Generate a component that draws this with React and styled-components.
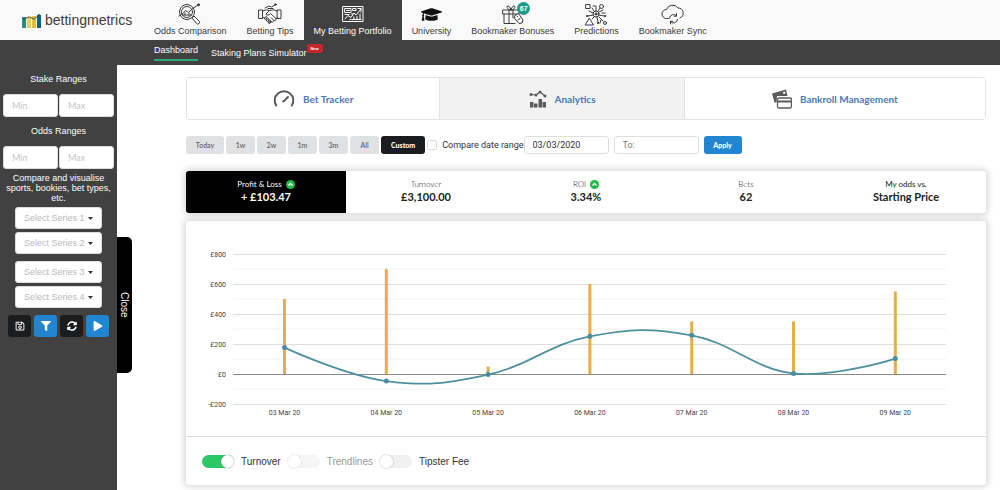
import React from "react";
import styled, { createGlobalStyle, css } from "styled-components";
import { FaGraduationCap, FaFilter, FaSyncAlt, FaPlay, FaRegSave } from "react-icons/fa";

const sans = `"Liberation Sans", Arial, sans-serif`;
const lato = `Lato, "Liberation Sans", sans-serif`;
const dark = "#414141";
const blue = "#2185d0";

const GlobalStyle = createGlobalStyle`
  *, *::before, *::after { box-sizing: border-box; }
  body { margin: 0; background: #fff; color: #333; font-family: ${sans}; font-size: 9px; }
  button, input, select { font: inherit; margin: 0; }
  a { color: inherit; text-decoration: none; }
`;

const Page = styled.div`
  display: flex;
  flex-direction: column;
  min-height: 100vh;
`;

const Header = styled.header`
  display: flex;
  height: 40px;
  background: #f9f9f9;
`;

const Logo = styled.a`
  display: flex;
  align-items: center;
  gap: 4px;
  width: 144px;
  padding-left: 22px;
  font-size: 14px;
  color: #3c3c3c;
`;

const Nav = styled.nav`
  display: flex;
`;

const NavItem = styled.a`
  position: relative;
  display: flex;
  flex-direction: column;
  align-items: center;
  padding: 3px 10px 0;
  line-height: 10px;
  white-space: nowrap;
  color: ${(p) => (p.$active ? "#fff" : "#3a3a3a")};
  background: ${(p) => (p.$active ? dark : "transparent")};
  svg { height: 23px; }
`;

const CountBadge = styled.span`
  position: absolute;
  top: 2px;
  left: 56px;
  width: 13px;
  height: 13px;
  border-radius: 50%;
  background: #1a9c86;
  color: #fff;
  font: bold 7px/13px ${sans};
  text-align: center;
`;

const SubNav = styled.nav`
  display: flex;
  align-items: flex-start;
  gap: 13px;
  height: 25px;
  padding: 4px 0 0 154px;
  background: ${dark};
  color: #fff;
`;

const SubLink = styled.a`
  position: relative;
  line-height: 12px;
  height: 17px;
  ${(p) => (p.$active ? css`border-bottom: 2px solid #2fa878;` : css`padding-top: 3px;`)}
`;

const NewBadge = styled.span`
  position: absolute;
  top: 0;
  left: 100%;
  width: 16px;
  height: 9px;
  border-radius: 3px;
  background: #c5282c;
  font: bold 4px/9px ${sans};
  text-align: center;
`;

const Body = styled.div`
  display: flex;
  flex: 1;
`;

const Sidebar = styled.aside`
  position: relative;
  flex: none;
  width: 117px;
  padding: 8px 3px;
  background: ${dark};
  color: #fff;
`;

const CloseTab = styled.button`
  position: absolute;
  top: 172px;
  left: 100%;
  width: 15px;
  height: 136px;
  padding: 0;
  border: 0;
  border-radius: 0 5px 5px 0;
  background: #000;
  color: #fff;
  font-size: 10px;
  line-height: 15px;
  writing-mode: vertical-rl;
`;

const RangeGroup = styled.fieldset`
  margin: 0;
  padding: 0;
  border: 0;
`;

const RangeTitle = styled.legend`
  width: 100%;
  padding: 0;
  line-height: 12px;
  margin-bottom: 9px;
  text-align: center;
`;

const RangeRow = styled.div`
  display: grid;
  grid-template-columns: 1fr 1fr;
  gap: 1px;
  margin-bottom: 8px;
`;

const TextInput = styled.input`
  min-width: 0;
  height: 23px;
  padding: 0 8px;
  border: 1px solid #dedede;
  border-radius: 3px;
  background: #fff;
  color: #333;
  font-family: ${lato};
  &::placeholder { color: #c4c4c4; }
`;

const CompareNote = styled.p`
  margin: -4px 0 4px;
  line-height: 10px;
  text-align: center;
`;

const SeriesList = styled.div`
  display: flex;
  flex-direction: column;
  gap: 3px;
  padding: 0 12px;
  margin-bottom: 7px;
`;

const SeriesBox = styled.div`
  position: relative;
  margin-bottom: ${(p) => (p.$spaced ? "4px" : "0")};
  svg { position: absolute; right: 9px; top: 10px; pointer-events: none; }
`;

const SeriesSelect = styled.select`
  appearance: none;
  display: block;
  width: 100%;
  height: 22px;
  padding: 0 0 0 8px;
  border: 1px solid #ddd;
  border-radius: 3px;
  background: #fff;
  color: #b9b9b9;
`;

const ActionRow = styled.div`
  display: flex;
  justify-content: center;
  gap: 3px;
`;

const ActionButton = styled.button`
  display: grid;
  place-items: center;
  width: 23px;
  height: 22px;
  padding: 0;
  border: 0;
  border-radius: 3px;
  background: ${(p) => (p.$primary ? blue : "#1b1c1d")};
  color: #fff;
  font-size: 10px;
`;

const Main = styled.main`
  flex: 1;
  min-width: 0;
  padding: 12px 14px 5px 69px;
`;

const Tabs = styled.nav`
  display: grid;
  grid-template-columns: 254fr 245fr 301fr;
  height: 43px;
  border: 1px solid #e2e3e4;
  border-radius: 3px;
`;

const Tab = styled.a`
  display: flex;
  align-items: center;
  justify-content: center;
  gap: 8px;
  border-right: 1px solid #e2e3e4;
  background: ${(p) => (p.$active ? "#f2f2f3" : "#fff")};
  color: #4a78b5;
  font: bold 10px/14px ${lato};
  &:last-child { border-right: 0; }
  svg { color: #5a5a5a; }
`;

const Filters = styled.form`
  display: flex;
  align-items: center;
  gap: 2px;
  margin: 15px 0 17px;
  height: 19px;
`;

const PeriodButton = styled.button`
  height: 18px;
  min-width: ${(p) => (p.$wide ? "38px" : "29px")};
  padding: 0 ${(p) => (p.$active ? "10px" : "0")};
  border: 0;
  border-radius: 3px;
  background: ${(p) => (p.$active ? "#1b1c1d" : "#e0e1e2")};
  color: ${(p) => (p.$active ? "#fff" : "#666")};
  font: bold 7px/18px ${lato};
  font-weight: ${(p) => (p.$active ? 900 : 600)};
`;

const Compare = styled.label`
  display: flex;
  align-items: center;
  gap: 5px;
  margin-right: -2px;
  font-family: Roboto, ${sans};
  white-space: nowrap;
`;

const CheckBox = styled.input`
  appearance: none;
  width: 10px;
  height: 10px;
  border: 1px solid #dedede;
  border-radius: 2px;
  background: #fff;
`;

const DateInput = styled(TextInput)`
  width: 85px;
  height: 18px;
  margin-right: 3px;
  font-family: Roboto, ${sans};
  &::placeholder { color: #777; }
`;

const ApplyButton = styled.button`
  width: 38px;
  height: 18px;
  padding: 0;
  border: 0;
  border-radius: 3px;
  background: ${blue};
  color: #fff;
  font: 900 7px/18px ${lato};
`;

const Stats = styled.section`
  display: grid;
  grid-template-columns: repeat(5, 1fr);
  height: 42px;
  margin-bottom: 8px;
  border-radius: 3px;
  background: #fff;
  box-shadow: 0 0 6px 2px rgba(0, 0, 0, 0.16);
`;

const Stat = styled.div`
  display: flex;
  flex-direction: column;
  align-items: center;
  padding-top: 7px;
  border-radius: ${(p) => (p.$active ? "3px 0 0 3px" : "0")};
  background: ${(p) => (p.$active ? "#000" : "transparent")};
  color: ${(p) => (p.$active ? "#fff" : "#222")};
  font-family: ${lato};
`;

const StatLabel = styled.span`
  display: flex;
  align-items: center;
  gap: 4px;
  font-size: 8px;
  line-height: 12px;
  font-weight: ${(p) => (p.$strong ? 400 : 300)};
`;

const StatValue = styled.strong`
  font-size: 11px;
  line-height: 13px;
  font-weight: 700;
`;

const ChartCard = styled.section`
  border-radius: 3px;
  background: #fff;
  box-shadow: 0 0 6px 2px rgba(0, 0, 0, 0.16);
`;

const Chart = styled.svg`
  display: block;
  width: 100%;
  height: auto;
  font-family: Roboto, ${sans};
  font-size: 7px;
  fill: #444;
`;

const Switches = styled.div`
  display: flex;
  align-items: center;
  gap: 7px;
  height: 49px;
  padding-left: 16px;
  border-top: 1px solid #dcdcdc;
`;

const SwitchLabel = styled.label`
  display: flex;
  align-items: center;
  gap: 7px;
  font-size: 10px;
  color: ${(p) => (p.$muted ? "#999" : "#333")};
`;

const Switch = styled.input`
  appearance: none;
  display: flex;
  width: 32px;
  height: 13px;
  border-radius: 7px;
  background: #f0f0f0;
  &::before {
    content: "";
    width: 13px;
    height: 13px;
    border-radius: 50%;
    background: #fff;
    box-shadow: 0 0 1px 1px rgba(0, 0, 0, 0.1);
  }
  &:checked { background: #2bc866; justify-content: flex-end; }
  &:disabled { opacity: 0.6; }
`;

const Line = ({ w, h = 23, sw = 1, children }) => (
  <svg width={w} height={h} viewBox={`0 0 ${w} ${h}`} fill="none" stroke="currentColor"
    strokeWidth={sw} strokeLinecap="round" strokeLinejoin="round" aria-hidden="true">
    {children}
  </svg>
);

const LogoMark = () => (
  <svg width="19" height="15" viewBox="0 0 19 15" aria-hidden="true">
    <path d="M0 4h4v11H0z" fill="#2a8d8b" />
    <path d="M5 5h4v10H5z" fill="#ead05a" />
    <path d="M10 3h4v12h-4z" fill="#e5bd3f" />
    <path d="M15 2h4v13h-4z" fill="#155e7c" />
    <path d="M2 6l5-2 5 2 5-4" fill="none" stroke="#33515c" strokeWidth="1" />
    <circle cx="2" cy="6" r="1" fill="#174f60" /><circle cx="7" cy="4" r="1" fill="#c29c2b" />
    <circle cx="12" cy="6" r="1" fill="#7a8b3c" /><circle cx="17" cy="2" r="1" fill="#155e7c" />
  </svg>
);

const OddsIcon = () => (
  <Line w={26}>
    <circle cx="10" cy="9" r="7.5" /><circle cx="10" cy="9" r="5.5" />
    <path d="M2 13l4-2.500 2.500-3 3 2L15 6l6-4M5.500 12h9M8 10v2M12 10v2" />
    <circle cx="21.500" cy="1.800" r="1" fill="currentColor" />
    <path d="M15.500 14.500l1.500-1.500 5.500 5.500q.5 1.500-.8 2.300t-2.200-.3L15 15z" />
  </Line>
);

const HandshakeIcon = () => (
  <Line w={24}>
    <path d="M1 7h3.500v8.500H1zM19.500 7H23v8.500h-3.500zM4.500 8l4-1.200 3 .7M19.500 8l-4-1.200-4 .7-3.500 3.500c.5 1.800 2.800 1.500 4.500-.5l6 5.500M4.500 14.500l2 .5M19.500 14.500l-1.500 1.500c0 1.500-1 2-2.200 1.500-.3 1.500-1.300 2-2.500 1.300-.5 1.500-1.800 1.500-2.800.5" />
    <path d="M6.500 15l1.800-1.500q1.200.2.8 1.500l-1.500 1.500q-1.500 0-1.100-1.500M8.500 17l1.500-1.500q1.300.2.8 1.500l-1.300 1.500q-1.500 0-1-1.500M10.500 19l1.200-1.500q1.300.2.8 1.500l-1 1.500q-1.500 0-1-1.500M13.500 15l2.300 2.300M12 17l1.500 1.800" />
    <path d="M7 5l4-2 2.500 1 3.500-2.200M10 5.500h5" /><circle cx="17.500" cy="1.500" r=".8" fill="currentColor" />
  </Line>
);

const PortfolioIcon = () => (
  <Line w={22}>
    <path d="M1 3.500h20v15H1zM3 5.500h6v4H3zM4.500 7.500h3M11 5.500h3v2h-3zM3 16l3-3.500 3 2L12 10l2 2 5-6M16 5.500h3V9M3 11.500h4M10 16.500h9M12 14v2M15 13.500v3M18 11v5M8 16.500h1M9.500 11h1.500" />
  </Line>
);

const GiftIcon = () => (
  <Line w={24}>
    <path d="M2 7h16v4H2zM3 11v9.500h11M8 7v13M12 7v8M10 7C6 7 5 3 7 3s3 4 3 4 1-4 3-4 1 4-3 4" />
    <path d="M14 12.500l3.500-2 4.500 6.500-1 3-3 .5-4-4.500z" fill="#f9f9f9" /><path d="M16.500 13.500h.2M17 17l2-1.500" />
  </Line>
);

const PredictionsIcon = () => (
  <Line w={24}>
    <path d="M2 1.500h4v4H2zM5.500 15.500l4 6.500h-8z" /><circle cx="17.500" cy="3.500" r="2" /><circle cx="21" cy="20" r="1.500" />
    <circle cx="12" cy="11" r="3" /><circle cx="12" cy="11" r="1" fill="currentColor" />
    <path d="M12 8V3M15 9l4-2M15 12l5 1M9 10L5 8M9 12l-5 1M10 14l-2 2M13 14l1 5M15 14l4 4M14 8l2-3M10 8L8 5M9 3h2M18 10h3M17 17l-1 3" />
    <circle cx="3" cy="13" r=".7" /><circle cx="21" cy="13" r=".7" /><circle cx="14" cy="20" r=".7" />
  </Line>
);

const CloudSyncIcon = () => (
  <Line w={24}>
    <path d="M7.500 15.500H5.500a4.500 4.500 0 0 1 0-9A6.500 6.500 0 0 1 17 5a5.200 5.200 0 0 1 2 10" />
    <path d="M8.500 15a4 4 0 0 1 7-2V10.800M15.500 13.200h-2.300M16.500 16.500a4 4 0 0 1-7 2V20.800M9.500 18.300h2.300" />
  </Line>
);

const GaugeIcon = () => (
  <Line w={22} h={20} sw={2}>
    <path d="M3.200 16.500A9.300 9.300 0 1 1 18.800 16.500" />
    <path d="M11 12l4-4M10 12.500l1.500-1" />
  </Line>
);

const AnalyticsIcon = () => (
  <svg width="18" height="18" viewBox="0 0 18 18" fill="currentColor" aria-hidden="true">
    <path d="M1 12h3.500v5.500H1zM5 13.500h3.500v4H5zM9.500 9h3.500v8.500H9.500zM13.500 12H17v5.500h-3.500z" />
    <path d="M2 4.500l5 .5 4-3 5 4" fill="none" stroke="currentColor" strokeWidth="1.200" />
    <circle cx="2" cy="4.500" r="1.500" /><circle cx="7" cy="5" r="1.500" /><circle cx="11" cy="2" r="1.500" /><circle cx="16" cy="6" r="1.500" />
  </svg>
);

const CardsIcon = () => (
  <svg width="20" height="20" viewBox="0 0 20 20" aria-hidden="true">
    <path d="M0 4.500L14 .5l1.500 6.500H5l-.5 6.500h-2z" fill="currentColor" />
    <path d="M11 3l2-.5.5 2-2 .5z" fill="#fff" />
    <rect x="5.500" y="9" width="14" height="10" rx="1.500" fill="#fff" stroke="currentColor" strokeWidth="1.300" />
    <path d="M5.500 12.500h14" stroke="currentColor" strokeWidth="2" />
  </svg>
);

const UpIcon = () => (
  <svg width="9" height="9" viewBox="0 0 9 9" aria-hidden="true">
    <circle cx="4.500" cy="4.500" r="4.500" fill="#21ba45" />
    <path d="M2.500 5.500l2-2 2 2" fill="none" stroke="#fff" strokeWidth="1.300" />
  </svg>
);

const Caret = () => (
  <svg width="5" height="3" viewBox="0 0 5 3" aria-hidden="true"><path d="M0 0h5L2.500 3z" fill="#333" /></svg>
);

const navItems = [
  { label: "Odds Comparison", icon: <OddsIcon /> },
  { label: "Betting Tips", icon: <HandshakeIcon /> },
  { label: "My Betting Portfolio", icon: <PortfolioIcon />, active: true },
  { label: "University", icon: <FaGraduationCap size={21} color="#111" /> },
  { label: "Bookmaker Bonuses", icon: <GiftIcon />, count: 67 },
  { label: "Predictions", icon: <PredictionsIcon /> },
  { label: "Bookmaker Sync", icon: <CloudSyncIcon /> },
];

const stats = [
  { label: "Profit & Loss", value: "+ £103.47", up: true, active: true },
  { label: "Turnover", value: "£3,100.00" },
  { label: "ROI", value: "3.34%", up: true },
  { label: "Bets", value: "62" },
  { label: "My odds vs.", value: "Starting Price", strong: true },
];

const days = [
  { day: "03 Mar 20", turnover: 500, profit: 176 },
  { day: "04 Mar 20", turnover: 700, profit: -47 },
  { day: "05 Mar 20", turnover: 50, profit: -4 },
  { day: "06 Mar 20", turnover: 600, profit: 251 },
  { day: "07 Mar 20", turnover: 350, profit: 258 },
  { day: "08 Mar 20", turnover: 350, profit: 4 },
  { day: "09 Mar 20", turnover: 550, profit: 103 },
];

const xOf = (i) => 98.5 + i * 101.8;
const yOf = (v) => 153 - v * 0.15;

// Smooth curve: each point's tangent is parallel to the line between its neighbours.
function splinePath(pts) {
  const tangent = (i) =>
    pts[i - 1] && pts[i + 1]
      ? { x: (pts[i + 1].x - pts[i - 1].x) / 5, y: (pts[i + 1].y - pts[i - 1].y) / 5 }
      : { x: 0, y: 0 };
  let path = `M${pts[0].x} ${pts[0].y}`;
  for (let i = 1; i < pts.length; i++) {
    const a = pts[i - 1];
    const b = pts[i];
    const ta = tangent(i - 1);
    const tb = tangent(i);
    path += `C${a.x + ta.x} ${a.y + ta.y} ${b.x - tb.x} ${b.y - tb.y} ${b.x} ${b.y}`;
  }
  return path;
}

function ProfitChart() {
  const pts = days.map((d, i) => ({ x: xOf(i), y: yOf(d.profit) }));
  return (
    <Chart viewBox="0 0 800 215" role="img" aria-label="Profit and turnover by day">
      {[700, 500, 300, 100, -100].map((v) => (
        <path key={v} d={`M47 ${yOf(v)}H760`} stroke="#f2f2f2" />
      ))}
      {[800, 600, 400, 200, 0, -200].map((v) => (
        <g key={v}>
          <path d={`M47 ${yOf(v) + 0.5}H760`} stroke="#dedede" />
          <text x="40" y={yOf(v) + 3} textAnchor="end">{v < 0 ? `-£${-v}` : `£${v}`}</text>
        </g>
      ))}
      {days.map((d, i) => (
        <g key={d.day}>
          <rect x={xOf(i) - 1.5} y={yOf(d.turnover)} width="3" height={d.turnover * 0.15} fill="#e8ae45" />
          <text x={xOf(i)} y="194" textAnchor="middle">{d.day}</text>
        </g>
      ))}
      <path d="M47 153.500H760" stroke="#8a8a8a" />
      <path d={splinePath(pts)} fill="none" stroke="#4e909e" strokeWidth="1.800" />
      {pts.map((p) => <circle key={p.x} cx={p.x} cy={p.y} r="2.500" fill="#4a8da0" />)}
    </Chart>
  );
}

const Range = ({ title }) => (
  <RangeGroup>
    <RangeTitle>{title}</RangeTitle>
    <RangeRow>
      <TextInput placeholder="Min" aria-label={`${title} minimum`} />
      <TextInput placeholder="Max" aria-label={`${title} maximum`} />
    </RangeRow>
  </RangeGroup>
);

export default function App() {
  return (
    <Page>
      <GlobalStyle />
      <Header>
        <Logo href="#home"><LogoMark />bettingmetrics</Logo>
        <Nav>
          {navItems.map((n) => (
            <NavItem key={n.label} href="#nav" $active={n.active}>
              {n.icon}
              {n.label}
              {n.count && <CountBadge>{n.count}</CountBadge>}
            </NavItem>
          ))}
        </Nav>
      </Header>
      <SubNav>
        <SubLink href="#dashboard" $active>Dashboard</SubLink>
        <SubLink href="#simulator">Staking Plans Simulator<NewBadge>New</NewBadge></SubLink>
      </SubNav>
      <Body>
        <Sidebar>
          <Range title="Stake Ranges" />
          <Range title="Odds Ranges" />
          <CompareNote>Compare and visualise sports, bookies, bet types, etc.</CompareNote>
          <SeriesList>
            {[1, 2, 3, 4].map((n) => (
              <SeriesBox key={n} $spaced={n === 2}>
                <SeriesSelect aria-label={`Series ${n}`}>
                  <option>Select Series {n}</option>
                </SeriesSelect>
                <Caret />
              </SeriesBox>
            ))}
          </SeriesList>
          <ActionRow>
            <ActionButton aria-label="Save"><FaRegSave /></ActionButton>
            <ActionButton aria-label="Filter" $primary><FaFilter /></ActionButton>
            <ActionButton aria-label="Refresh"><FaSyncAlt /></ActionButton>
            <ActionButton aria-label="Run" $primary><FaPlay /></ActionButton>
          </ActionRow>
          <CloseTab>Close</CloseTab>
        </Sidebar>
        <Main>
          <Tabs>
            <Tab href="#tracker"><GaugeIcon />Bet Tracker</Tab>
            <Tab href="#analytics" $active><AnalyticsIcon />Analytics</Tab>
            <Tab href="#bankroll"><CardsIcon />Bankroll Management</Tab>
          </Tabs>
          <Filters>
            <PeriodButton type="button" $wide>Today</PeriodButton>
            {["1w", "2w", "1m", "3m", "All"].map((p) => (
              <PeriodButton type="button" key={p}>{p}</PeriodButton>
            ))}
            <PeriodButton type="button" $active>Custom</PeriodButton>
            <Compare><CheckBox type="checkbox" />Compare date range</Compare>
            <DateInput defaultValue="03/03/2020" aria-label="From" />
            <DateInput placeholder="To:" aria-label="To" />
            <ApplyButton type="button">Apply</ApplyButton>
          </Filters>
          <Stats>
            {stats.map((s) => (
              <Stat key={s.label} $active={s.active}>
                <StatLabel $strong={s.active || s.strong}>{s.label}{s.up && <UpIcon />}</StatLabel>
                <StatValue>{s.value}</StatValue>
              </Stat>
            ))}
          </Stats>
          <ChartCard>
            <ProfitChart />
            <Switches>
              <SwitchLabel><Switch type="checkbox" defaultChecked />Turnover</SwitchLabel>
              <SwitchLabel $muted><Switch type="checkbox" disabled />Trendlines</SwitchLabel>
              <SwitchLabel><Switch type="checkbox" />Tipster Fee</SwitchLabel>
            </Switches>
          </ChartCard>
        </Main>
      </Body>
    </Page>
  );
}
